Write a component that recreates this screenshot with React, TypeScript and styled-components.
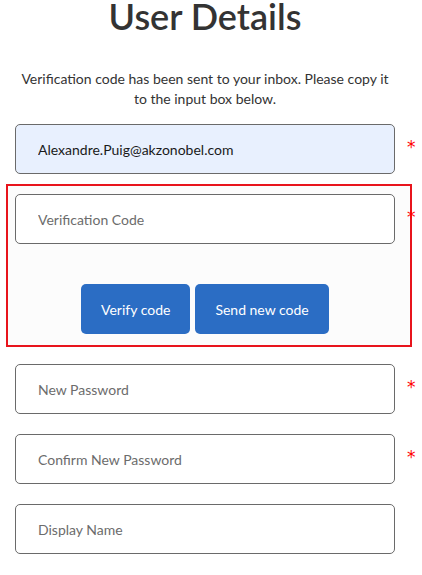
import React from "react";
import styled, { createGlobalStyle } from "styled-components";

const Global = createGlobalStyle`
  html, body { margin: 0; padding: 0; background: #ffffff; }
  body { font-family: Lato, "Open Sans", sans-serif; color: #333333; }
  * { box-sizing: border-box; }
`;

const Page = styled.div`
  width: 422px;
  height: 575px;
  overflow: hidden;
  display: flex;
  flex-direction: column;
`;

const Title = styled.h1`
  margin: 0;
  width: 410px;
  text-align: center;
  font-size: 36px;
  line-height: 32px;
  font-weight: 600;
  color: #333333;
`;

const Intro = styled.p`
  margin: 37px 0 0 0;
  width: 410px;
  padding: 0 18px;
  text-align: center;
  font-size: 14px;
  line-height: 20px;
  color: #333333;
`;

const Row = styled.div<{ $top?: number }>`
  display: flex;
  align-items: flex-start;
  margin-top: ${(p) => p.$top ?? 20}px;
  margin-left: 15px;
`;

const InnerRow = styled.div`
  display: flex;
  align-items: flex-start;
  width: 410px;
`;

const Field = styled.input<{ $filled?: boolean }>`
  width: 380px;
  height: 50px;
  flex: none;
  border: 1px solid #6a6a6a;
  border-radius: 5px;
  padding: 0 22px;
  font-family: Lato, "Open Sans", sans-serif;
  font-size: 14px;
  color: #1a1a1a;
  background: ${(p) => (p.$filled ? "#e8f0fe" : "#ffffff")};
  outline: none;
  &::placeholder { color: #6c6c6c; opacity: 1; }
`;

const Star = styled.span`
  color: #ff0000;
  font-size: 17px;
  line-height: 14px;
  margin: 16px 0 0 12px;
  font-family: "DejaVu Sans", sans-serif;
`;

const Highlight = styled.div`
  margin: 10px 0 0 6px;
  width: 406px;
  border: 2px solid #e8141c;
  background: #fcfcfc;
  padding: 8px 0 11px 7px;
  display: flex;
  flex-direction: column;
`;

const Buttons = styled.div`
  display: flex;
  gap: 5px;
  margin: 40px 0 0 66px;
`;

const Button = styled.button`
  height: 50px;
  padding: 0 20px;
  border: none;
  border-radius: 5px;
  background: #2b6dc4;
  color: #ffffff;
  font-family: Lato, "Open Sans", sans-serif;
  font-size: 14px;
`;

export default function App() {
  return (
    <Page>
      <Global />
      <Title>User Details</Title>
      <Intro>
        Verification code has been sent to your inbox. Please copy it to the input box below.
      </Intro>
      <Row $top={15}>
        <Field $filled defaultValue="Alexandre.Puig@akzonobel.com" />
        <Star>*</Star>
      </Row>
      <Highlight>
        <InnerRow>
          <Field placeholder="Verification Code" />
          <Star>*</Star>
        </InnerRow>
        <Buttons>
          <Button>Verify code</Button>
          <Button>Send new code</Button>
        </Buttons>
      </Highlight>
      <Row $top={17}>
        <Field placeholder="New Password" />
        <Star>*</Star>
      </Row>
      <Row>
        <Field placeholder="Confirm New Password" />
        <Star>*</Star>
      </Row>
      <Row>
        <Field placeholder="Display Name" />
      </Row>
    </Page>
  );
}
